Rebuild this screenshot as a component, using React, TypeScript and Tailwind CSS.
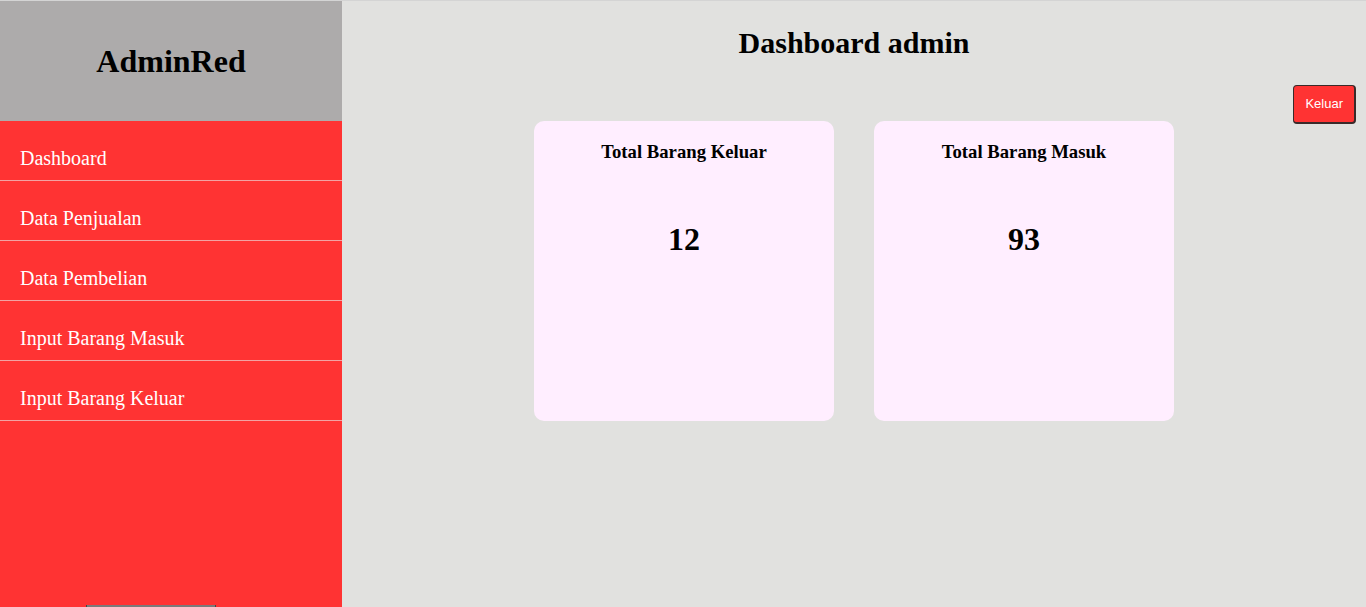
import React from "react";

const serif = { fontFamily: '"Liberation Serif", "Times New Roman", serif' };

export default function App() {
  const items = ["Dashboard", "Data Penjualan", "Data Pembelian", "Input Barang Masuk", "Input Barang Keluar"];
  return (
    <div className="w-[1366px] h-[607px] overflow-hidden flex flex-col bg-[#e1e1df]" style={serif}>
      <div className="h-px bg-[#d4d4d4]" />
      <div className="flex flex-1">
        <aside className="w-[342px] flex flex-col bg-[#ff3333]">
          <div className="h-[120px] bg-[#adabab] flex items-center justify-center">
            <h1 className="text-[32px] font-bold text-black">AdminRed</h1>
          </div>
          <nav className="flex flex-col">
            {items.map((it) => (
              <div key={it} className="h-[60px] flex items-center pl-[20px] border-b border-[#f2a3a3] text-white text-[20px]">
                <span className="mt-[15px]">{it}</span>
              </div>
            ))}
          </nav>
          <div className="flex-1" />
          <div className="h-[2px] w-[130px] ml-[86px] bg-[#7a7a7a] border-x border-[#444]" />
        </aside>
        <main className="flex-1 flex flex-col">
          <h2 className="text-[30px] font-bold text-center text-black mt-[25px] leading-[34px]">Dashboard admin</h2>
          <div className="flex justify-end pr-[10px] mt-[25px]">
            <button className="h-[39px] px-[11px] bg-[#ff3333] text-white text-[13px] rounded-[4px] border-b-2 border-r-2 border-t border-l border-[#3a2a2a]" style={{ fontFamily: '"Liberation Sans", Arial, sans-serif' }}>
              Keluar
            </button>
          </div>
          <div className="flex justify-center gap-[40px] mt-[-3px]">
            {[
              ["Total Barang Keluar", "12"],
              ["Total Barang Masuk", "93"],
            ].map(([t, n]) => (
              <div key={t} className="w-[300px] h-[300px] rounded-[10px] bg-[#ffeeff] flex flex-col items-center">
                <div className="text-[18.72px] font-bold text-black mt-[17px]">{t}</div>
                <div className="text-[32px] font-bold text-black mt-[49px]">{n}</div>
              </div>
            ))}
          </div>
        </main>
      </div>
    </div>
  );
}
